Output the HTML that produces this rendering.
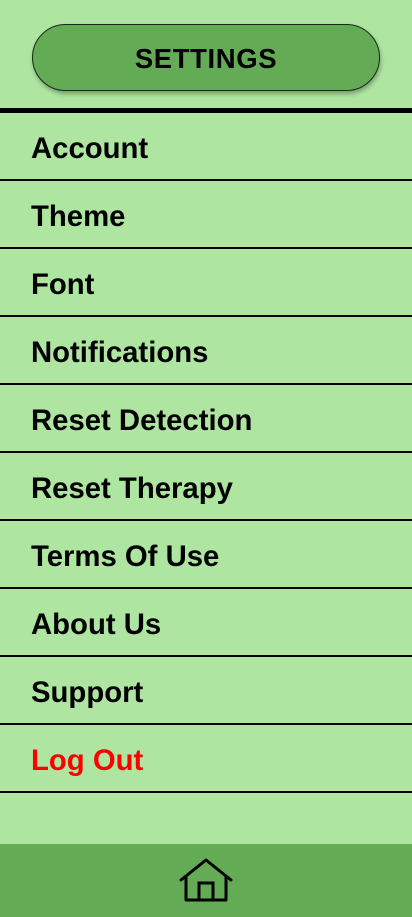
<!DOCTYPE html>
<html><head><meta charset="utf-8"><style>
html,body{margin:0;padding:0}
body{width:412px;height:917px;background:#ade5a1;position:relative;overflow:hidden;font-family:"Liberation Sans",Arial,sans-serif}
.btn{position:absolute;left:32px;top:24px;width:346px;height:65px;border:1px solid #1a2a16;border-radius:34px;background:#64ab56;box-shadow:1px 3px 4px rgba(0,0,0,0.3);text-align:center;line-height:67px;font-weight:bold;font-size:27.5px;letter-spacing:0.6px;color:#000}
.bar{position:absolute;left:0;top:108px;width:412px;height:5px;background:#000}
.list{position:absolute;left:0;top:113px;width:412px}
.row{height:68px;box-sizing:border-box;border-bottom:2px solid #000;padding-left:31px;padding-top:3px;line-height:66px;font-weight:bold;font-size:29.3px;color:#000}
.red{color:#f00}
.foot{position:absolute;left:0;top:844px;width:412px;height:73px;background:#64ab56}
</style></head><body>
<div class="btn">SETTINGS</div>
<div class="bar"></div>
<div class="list">
<div class="row">Account</div>
<div class="row">Theme</div>
<div class="row">Font</div>
<div class="row">Notifications</div>
<div class="row">Reset Detection</div>
<div class="row">Reset Therapy</div>
<div class="row">Terms Of Use</div>
<div class="row">About Us</div>
<div class="row">Support</div>
<div class="row red">Log Out</div>
</div>
<div class="foot">
<svg width="412" height="73" viewBox="0 844 412 73" style="position:absolute;left:0;top:0">
<path d="M181 880 L206 860 L231 880" fill="none" stroke="#000" stroke-width="3" stroke-linecap="round" stroke-linejoin="round"/>
<path d="M186 876 V900 H226 V876" fill="none" stroke="#000" stroke-width="3" stroke-linejoin="round"/>
<path d="M199 900 V883 H213 V900" fill="none" stroke="#000" stroke-width="3"/>
</svg>
</div>
</body></html>
